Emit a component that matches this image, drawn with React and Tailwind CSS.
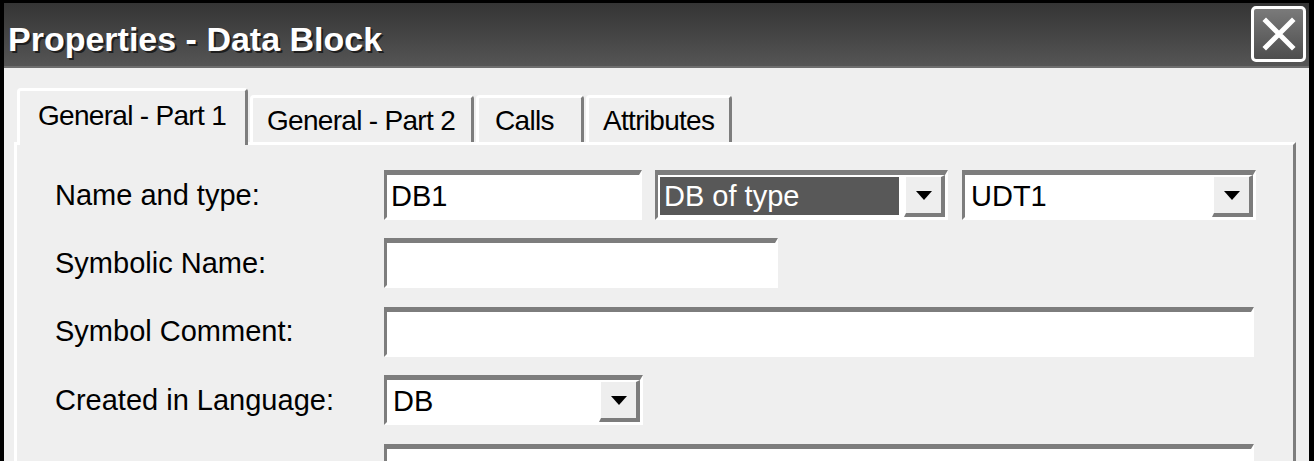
import React from 'react';

const font = { fontFamily: '"Liberation Sans", Arial, sans-serif' };

// little black arrow used on the combo buttons
const Arrow = () => (
  <svg width="16" height="9" viewBox="0 0 16 9">
    <polygon points="0,0 16,0 8,9" fill="#000" />
  </svg>
);

const DropButton = () => (
  <div className="flex h-full w-[41px] shrink-0 items-center justify-center border-t-[2px] border-l-[2px] border-r-[4px] border-b-[4px] border-t-white border-l-white border-r-[#7c7c7c] border-b-[#7c7c7c] bg-[#eeeeee]">
    <Arrow />
  </div>
);

// classic sunken edit box
const Field = ({ className = '', children }) => (
  <div className={`flex h-[50px] border-t-[5px] border-l-[3px] border-r-[3px] border-b-[3px] border-t-[#7d7d7d] border-l-[#7d7d7d] border-r-white border-b-white bg-white ${className}`}>
    {children}
  </div>
);

const Combo = ({ className, text, selected }) => (
  <Field className={className}>
    <div className="flex flex-1 items-center py-[2px] pl-[2px] pr-[5px]">
      <div className={`flex h-full flex-1 items-center pl-[4px] text-[29px] leading-none ${selected ? 'bg-[#585858] text-white' : 'text-black'}`}>
        {text}
      </div>
    </div>
    <DropButton />
  </Field>
);

const Row = ({ label, children }) => (
  <div className="flex h-[50px] items-center">
    <div className="w-[367px] shrink-0 pl-[38px] text-[29px] leading-none text-black">{label}</div>
    <div className="flex items-center">{children}</div>
  </div>
);

const tabs = [
  { name: 'General - Part 1', w: 'w-[231px]', pl: 'pl-[18px]' },
  { name: 'General - Part 2', w: 'w-[224px]', pl: 'pl-[14px]' },
  { name: 'Calls', w: 'w-[108px]', pl: 'pl-[16px]' },
  { name: 'Attributes', w: 'w-[146px]', pl: 'pl-[14px]' },
];

export default function App() {
  return (
    <div className="flex h-[461px] w-[1314px] flex-col overflow-hidden bg-black pt-[3px] pl-[4px] pr-[5px] pb-[4px]" style={font}>
      {/* title bar */}
      <div className="flex h-[65px] shrink-0 items-start justify-between border-b-[2px] border-[#6e6e6e] bg-gradient-to-b from-[#353535] to-[#555555]">
        <div className="pl-[4px] pt-[19px] text-[34px] font-bold leading-none text-white [text-shadow:2px_2px_0_#1e1e1e]">
          Properties - Data Block
        </div>
        <div className="mr-[3px] mt-[3px] flex h-[56px] w-[55px] items-center justify-center rounded-[5px] border-[3px] border-white bg-gradient-to-b from-[#7a7a7a] to-[#4e4e4e]">
          <svg width="34" height="34" viewBox="0 0 34 34">
            <path d="M4 4 L30 30 M30 4 L4 30" stroke="#fff" strokeWidth="5" strokeLinecap="square" />
          </svg>
        </div>
      </div>

      {/* dialog body */}
      <div className="flex flex-1 flex-col bg-[#efefef] pl-[10px] pr-[13px] pt-[20px]">
        <div className="relative z-10 -mb-[3px] flex h-[57px] items-end gap-[2px] pl-[3px]">
          {tabs.map((t, i) => (
            <div
              key={t.name}
              className={`${t.w} ${t.pl} flex shrink-0 items-center rounded-t-[4px] border-t-[3px] border-l-[3px] border-r-[3px] border-t-white border-l-white border-r-[#7d7d7d] bg-[#efefef] text-[28px] leading-none tracking-[-0.7px] text-black ${i === 0 ? 'h-[57px] pb-[5px]' : 'mb-[3px] h-[47px] pt-[2px]'}`}
            >
              {t.name}
            </div>
          ))}
        </div>

        <div className="flex flex-1 flex-col gap-[18.4px] border-t-[3px] border-l-[3px] border-r-[3px] border-t-white border-l-white border-r-[#7d7d7d] pt-[25px]">
          <Row label="Name and type:">
            <Field className="w-[258px]">
              <div className="flex items-center pl-[4px] text-[29px] leading-none text-black">DB1</div>
            </Field>
            <Combo className="ml-[13px] w-[293px]" text="DB of type" selected />
            <Combo className="ml-[14px] w-[294px]" text="UDT1" />
          </Row>
          <Row label="Symbolic Name:">
            <Field className="w-[394px]" />
          </Row>
          <Row label="Symbol Comment:">
            <Field className="w-[870px]" />
          </Row>
          <Row label="Created in Language:">
            <Combo className="w-[259px]" text="DB" />
          </Row>
          <Row label="">
            <Field className="w-[870px]" />
          </Row>
        </div>
      </div>
    </div>
  );
}
